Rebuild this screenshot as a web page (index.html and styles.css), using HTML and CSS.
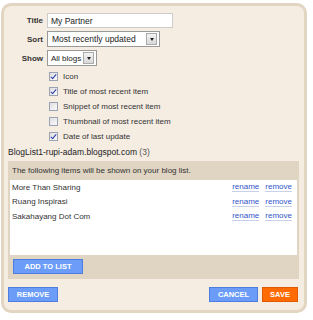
FILE: index.html
```html
<!DOCTYPE html>
<html>
<head lang="en">
    <meta charset="UTF-8">
    <title>Blog List</title>
    <link rel="stylesheet" href="styles.css">
</head>
<body>
<div class="panel">
    <!--settings-->
    <div class="form">
        <label class="lbl">Title</label>
        <div><input class="txt" type="text" value="My Partner"></div>
        <label class="lbl">Sort</label>
        <div class="sel sel-sort"><span>Most recently updated</span><i></i></div>
        <label class="lbl">Show</label>
        <div class="sel sel-show"><span>All blogs</span><i></i></div>
    </div>

    <ul class="checks">
        <li><b class="cb on"></b>Icon</li>
        <li><b class="cb on"></b>Title of most recent item</li>
        <li><b class="cb"></b>Snippet of most recent item</li>
        <li><b class="cb"></b>Thumbnail of most recent item</li>
        <li><b class="cb on"></b>Date of last update</li>
    </ul>

    <div class="list-title">BlogList1-rupi-adam.blogspot.com <span>(3)</span></div>

    <div class="list-box">
        <div class="list-head">The following items will be shown on your blog list.</div>
        <ul class="items">
            <li><span class="name">More Than Sharing</span><a href="#">rename</a><a href="#">remove</a></li>
            <li><span class="name">Ruang Inspirasi</span><a href="#">rename</a><a href="#">remove</a></li>
            <li><span class="name">Sakahayang Dot Com</span><a href="#">rename</a><a href="#">remove</a></li>
        </ul>
        <div class="list-foot"><button class="btn add">ADD TO LIST</button></div>
    </div>

    <div class="actions">
        <button class="btn rm">REMOVE</button>
        <span class="grow"></span>
        <button class="btn cancel">CANCEL</button>
        <button class="btn save">SAVE</button>
    </div>
</div>
</body>
</html>
```

FILE: styles.css
```css
*{
    margin:0;
    padding:0;
    box-sizing:border-box;
}
body{
    background:#fff;
    font-family:"Liberation Sans", Arial, sans-serif;
    font-size:8px;
    color:#333;
}
.panel{
    width:306px;
    height:310px;
    margin:3px 0 0 1px;
    background:#f5ece2;
    border:3px solid #e2d5c1;
    border-radius:10px;
    padding:7px 5px 0 4px;
    display:flex;
    flex-direction:column;
}
.form{
    display:grid;
    grid-template-columns:35px auto;
    column-gap:4px;
    row-gap:3px;
    align-items:center;
}
.lbl{
    text-align:right;
    font-weight:bold;
    color:#333;
}
.txt{
    width:126px;
    height:15px;
    border:1px solid #ccc;
    background:#fff;
    font-family:"Liberation Sans", Arial, sans-serif;
    font-size:8.5px;
    padding:0 3px;
    color:#222;
    outline:none;
}
.sel{
    height:16px;
    border:1px solid #999;
    background:#fff;
    display:flex;
    align-items:center;
    padding:0 2px 0 4px;
    font-size:8.5px;
    color:#222;
    white-space:nowrap;
}
.sel span{
    flex:1;
}
.sel i{
    width:11px;
    height:12px;
    border:1px solid #aaa;
    background:linear-gradient(#f4f4f4,#d8d8d8);
    position:relative;
    flex:none;
}
.sel i:after{
    content:"";
    position:absolute;
    top:4px;
    left:3px;
    border-top:3px solid #222;
    border-left:2px solid transparent;
    border-right:2px solid transparent;
}
.sel-sort{
    width:113px;
}
.sel-show{
    width:50px;
    padding-left:3px;
    font-size:8px;
}
.checks{
    list-style:none;
    margin:3px 0 0 41px;
}
.checks li{
    height:15px;
    display:flex;
    align-items:center;
    color:#333;
}
.cb{
    width:9px;
    height:9px;
    border:1px solid #9aa3b5;
    background:linear-gradient(135deg,#dedede,#fbfbfb);
    margin-right:5px;
    position:relative;
}
.cb.on:after{
    content:"";
    position:absolute;
    left:2px;
    top:0;
    width:2px;
    height:5px;
    border:solid #2b3ea8;
    border-width:0 1.5px 1.5px 0;
    transform:rotate(40deg);
}
.list-title{
    margin:3px 0 0 0;
    font-size:8.5px;
    color:#222;
}
.list-title span{
    color:#555;
}
.list-box{
    margin-top:4px;
    background:#e0d5c2;
    padding:0 2px 5px 2px;
}
.list-head{
    height:19px;
    line-height:19px;
    padding-left:2px;
    color:#333;
}
.items{
    list-style:none;
    background:#fff;
    height:75px;
    padding:0 5px 0 2px;
}
.items li{
    display:flex;
    align-items:center;
    height:14.5px;
}
.name{
    flex:1;
    color:#333;
}
.items a{
    color:#3356c9;
    text-decoration:none;
    border-bottom:1px solid #c8d0ea;
    line-height:9px;
    margin-left:6px;
}
.list-foot{
    padding:4px 0 0 3px;
}
.btn{
    background:#6b9cf8;
    border:1px solid #4d7de0;
    color:#fff;
    font-family:"Liberation Sans", Arial, sans-serif;
    font-size:7.5px;
    font-weight:bold;
    height:15px;
    padding:0 8px;
}
.add{
    width:70px;
    padding:0;
}
.rm{
    width:50px;
    padding:0;
}
.cancel{
    width:49px;
    padding:0;
}
.actions{
    display:flex;
    gap:4px;
    margin:8px 1px 0 0;
}
.grow{
    flex:1;
}
.save{
    width:36px;
    padding:0;
    background:#ff6b00;
    border-color:#e05800;
}
```
